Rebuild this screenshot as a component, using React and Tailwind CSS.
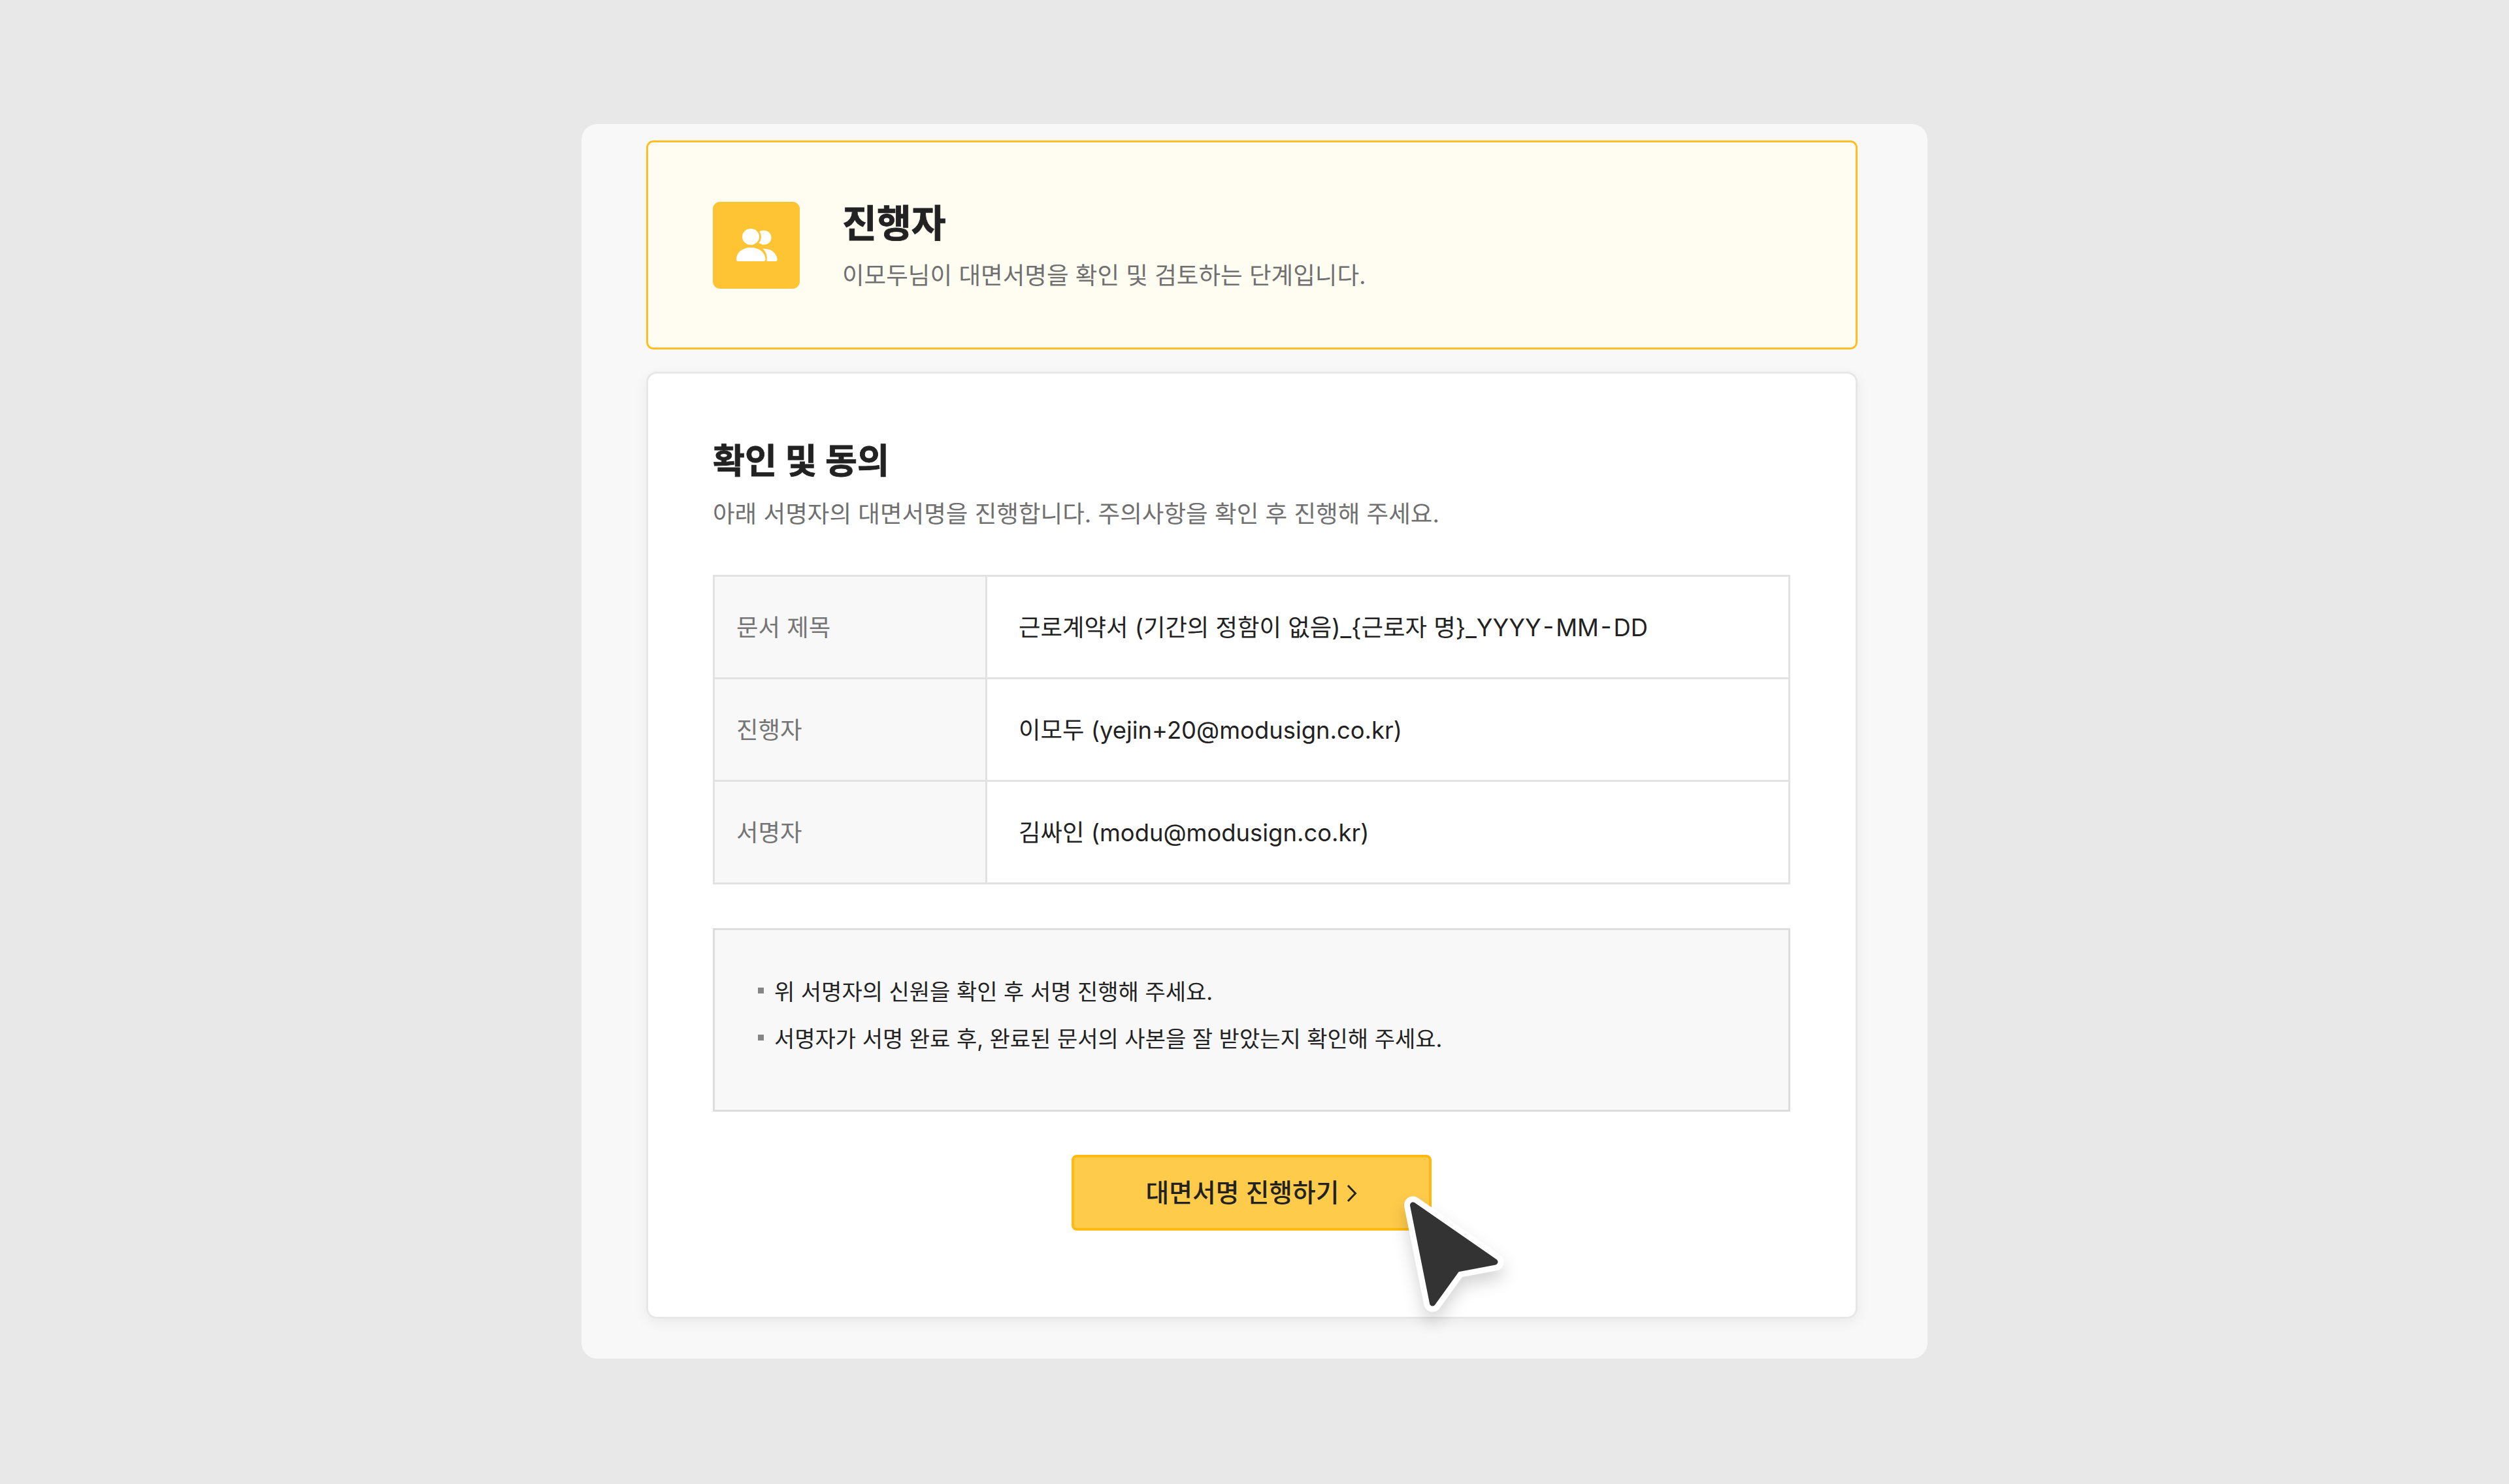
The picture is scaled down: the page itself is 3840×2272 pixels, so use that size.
const DOCUMENT_ROWS = [
  { label: '문서 제목', value: '근로계약서 (기간의 정함이 없음)_{근로자 명}_', date: ['YYYY', 'MM', 'DD'] },
  { label: '진행자', value: '이모두 (yejin+20@modusign.co.kr)' },
  { label: '서명자', value: '김싸인 (modu@modusign.co.kr)' },
]

const NOTICES = [
  '위 서명자의 신원을 확인 후 서명 진행해 주세요.',
  '서명자가 서명 완료 후, 완료된 문서의 사본을 잘 받았는지 확인해 주세요.',
]

function PeopleIcon() {
  return (
    <svg className="w-[64px] h-[52px]" fill="white" viewBox="0 0 64 52">
      <ellipse cx="23" cy="13.5" rx="13" ry="12.5" />
      <path d="M36.5 5.2Q39 3.8 43 3.8C49.5 3.8 54.5 8.6 54.5 14.8S49.5 25.6 43.5 25.6Q38.5 25.6 35.8 22.8Q41.8 14.4 36.5 5.2Z" />
      <path d="M1 48C1 38 10 30 23 30S45.5 38 45.5 48Q45.5 51 43 51H3.5Q1 51 1 48Z" />
      <path d="M41.5 31.8C54 30.5 63.6 39.5 63.6 48.5Q63.6 51 61 51H47.5Q49.5 39.5 41.5 31.8Z" />
    </svg>
  )
}

function Cursor() {
  return (
    <svg
      className="absolute left-[493px] top-[48px] w-[200px] h-[220px] drop-shadow-[0_14px_12px_rgba(0,0,0,0.16)]"
      strokeLinejoin="round"
      viewBox="0 0 200 220"
    >
      <path d="M29.5 29L155 116L97 127L59.5 179Z" fill="white" stroke="white" strokeWidth="27" />
      <path d="M29.5 29L155 116L97 127L59.5 179Z" fill="#333333" stroke="#333333" strokeWidth="9" />
    </svg>
  )
}

export default function App() {
  return (
    <div className="w-[3840px] h-[2272px] bg-[#e8e8e8] pt-[190px] pl-[890px] text-[#222222] font-[Inter,'Noto_Sans_CJK_KR',sans-serif]">
      <div className="w-[2060px] h-[1890px] rounded-[24px] bg-[#f8f8f8] pl-[99px] pt-[25px]">
        {/* Current step */}
        <div className="w-[1854px] h-[320px] flex items-center gap-[65px] pl-[99px] rounded-[11px] border-[3px] border-[#ffbf24] bg-[#fffdf2]">
          <div className="w-[133px] h-[133px] rounded-[11px] bg-[#ffc433] flex items-center justify-center">
            <PeopleIcon />
          </div>
          <div>
            <h1 className="text-[57.5px] leading-[80px] font-bold [-webkit-text-stroke:0.8px_#222222]">진행자</h1>
            <p className="mt-[14px] text-[36.55px] leading-[52px] text-[#707070]">
              이모두님이 대면서명을 확인 및 검토하는 단계입니다.
            </p>
          </div>
        </div>

        {/* Confirmation card */}
        <div className="mt-[34px] w-[1854px] h-[1450px] px-[99px] pt-[94px] rounded-[16px] border-[3px] border-[#e7e7e7] bg-white shadow-[0_6px_22px_rgba(0,0,0,0.06)]">
          <h2 className="text-[53.2px] leading-[80px] font-bold [-webkit-text-stroke:0.8px_#222222]">확인 및 동의</h2>
          <p className="mt-[15px] text-[36.55px] leading-[52px] text-[#707070]">
            아래 서명자의 대면서명을 진행합니다. 주의사항을 확인 후 진행해 주세요.
          </p>

          <div className="mt-[67px] w-[1649px] border-x-[3px] border-t-[3px] border-[#e2e2e2] text-[36.4px]">
            {DOCUMENT_ROWS.map(row => (
              <div key={row.label} className="h-[157px] flex border-b-[3px] border-[#e2e2e2]">
                <div className="w-[417px] flex items-center pl-[33px] pt-[2px] bg-[#f8f8f8] border-r-[3px] border-[#e2e2e2] text-[#757575]">
                  {row.label}
                </div>
                <div className="flex-1 flex items-center pl-[48px] pt-[2px]">
                  {row.value}
                  {/* cap-height hyphens between the date parts */}
                  {row.date?.map((part, i) => (
                    <span key={part} className="[font-feature-settings:'case']">
                      {i > 0 && <span className="mx-[2.9px]">-</span>}
                      {part}
                    </span>
                  ))}
                </div>
              </div>
            ))}
          </div>

          <ul className="mt-[67px] w-[1649px] h-[281px] pt-[59px] pl-[66px] border-[3px] border-[#dddddd] bg-[#f8f8f8] text-[34px] leading-[72px]">
            {NOTICES.map(notice => (
              <li key={notice} className="flex items-center gap-[16px]">
                <span className="w-[9px] h-[9px] mb-[6px] bg-[#858585]" />
                {notice}
              </li>
            ))}
          </ul>

          {/* Action */}
          <div className="relative mt-[66px] ml-[549px] w-[551px] h-[116px]">
            <button className="w-full h-full flex items-center justify-center gap-[12px] pt-px pl-[2px] rounded-[8px] border-[4px] border-[#ffb910] bg-[#ffcb4b] text-[38.8px] font-medium">
              대면서명 진행하기
              <svg className="w-[18px] h-[30px]" fill="none" stroke="currentColor" strokeWidth={3} viewBox="0 0 18 30">
                <path d="M2 3L13.5 15L2 27" />
              </svg>
            </button>
            <Cursor />
          </div>
        </div>
      </div>
    </div>
  )
}
